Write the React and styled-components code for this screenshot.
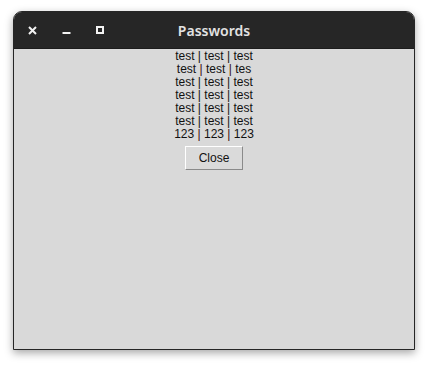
import React from "react";
import styled, { createGlobalStyle } from "styled-components";

const Global = createGlobalStyle`
  html, body { margin: 0; padding: 0; background: #ffffff; }
  body { font-family: "Liberation Sans", Arial, sans-serif; }
`;

const Page = styled.div`
  padding: 11px 0 0 13px;
  height: 366px;
  box-sizing: border-box;
`;

const Window = styled.div`
  width: 402px;
  height: 339px;
  box-sizing: border-box;
  border: 1px solid #262626;
  border-radius: 9px 9px 0 0;
  overflow: hidden;
  display: flex;
  flex-direction: column;
  background: #d9d9d9;
  box-shadow: 0 3px 9px rgba(0, 0, 0, 0.35);
`;

const TitleBar = styled.div`
  height: 36px;
  flex: none;
  background: #262626;
  border-bottom: 1px solid #1c1c1c;
  position: relative;
  display: flex;
  align-items: center;
  padding-left: 1px;
`;

const Ctrl = styled.button`
  width: 34px;
  height: 24px;
  padding: 0;
  border: 0;
  background: transparent;
  display: flex;
  align-items: center;
  justify-content: center;
  margin-top: 1px;
`;

const Title = styled.div`
  position: absolute;
  left: 0;
  right: 0;
  top: 0;
  bottom: 0;
  display: flex;
  align-items: center;
  justify-content: center;
  color: #e2e2e2;
  font-family: "Noto Sans", "Open Sans", sans-serif;
  font-weight: 600;
  font-size: 14px;
  pointer-events: none;
`;

const Body = styled.div`
  flex: 1;
  display: flex;
  flex-direction: column;
  align-items: center;
  padding-top: 1px;
`;

const Line = styled.div`
  font-family: "Liberation Sans", Arial, sans-serif;
  font-size: 12px;
  line-height: 13px;
  color: #111;
  white-space: pre;
`;

const Sep = styled.span`
  color: ${(p) => (p.$red ? "#3a0f0f" : "#111")};
`;

const CloseButton = styled.button`
  margin-top: 5px;
  width: 58px;
  height: 24px;
  box-sizing: border-box;
  background: #dadada;
  border-style: solid;
  border-width: 1px;
  border-color: #ffffff #8a8a8a #8a8a8a #ffffff;
  font-family: "Liberation Sans", Arial, sans-serif;
  font-size: 12px;
  color: #111;
  padding: 0;
`;

const rows = [
  ["test", "test", "test", false],
  ["test", "test", "tes", true],
  ["test", "test", "test", false],
  ["test", "test", "test", false],
  ["test", "test", "test", false],
  ["test", "test", "test", false],
  ["123", "123", "123", true],
];

export default function App() {
  return (
    <>
      <Global />
      <Page>
        <Window>
          <TitleBar>
            <Ctrl aria-label="close">
              <svg width="9" height="9" viewBox="0 0 9 9">
                <path d="M1 1 L8 8 M8 1 L1 8" stroke="#f2f2f2" strokeWidth="2" />
              </svg>
            </Ctrl>
            <Ctrl aria-label="minimize">
              <svg width="9" height="9" viewBox="0 0 9 9">
                <rect x="0.5" y="6" width="8" height="2" fill="#f2f2f2" />
              </svg>
            </Ctrl>
            <Ctrl aria-label="maximize">
              <svg width="9" height="9" viewBox="0 0 9 9">
                <rect x="1" y="1" width="6" height="6" fill="none" stroke="#f2f2f2" strokeWidth="2" />
              </svg>
            </Ctrl>
            <Title>Passwords</Title>
          </TitleBar>
          <Body>
            {rows.map(([a, b, c, red], i) => (
              <Line key={i}>
                {a} <Sep $red={red}>|</Sep> {b} <Sep $red={red}>|</Sep> {c}
              </Line>
            ))}
            <CloseButton>Close</CloseButton>
          </Body>
        </Window>
      </Page>
    </>
  );
}
